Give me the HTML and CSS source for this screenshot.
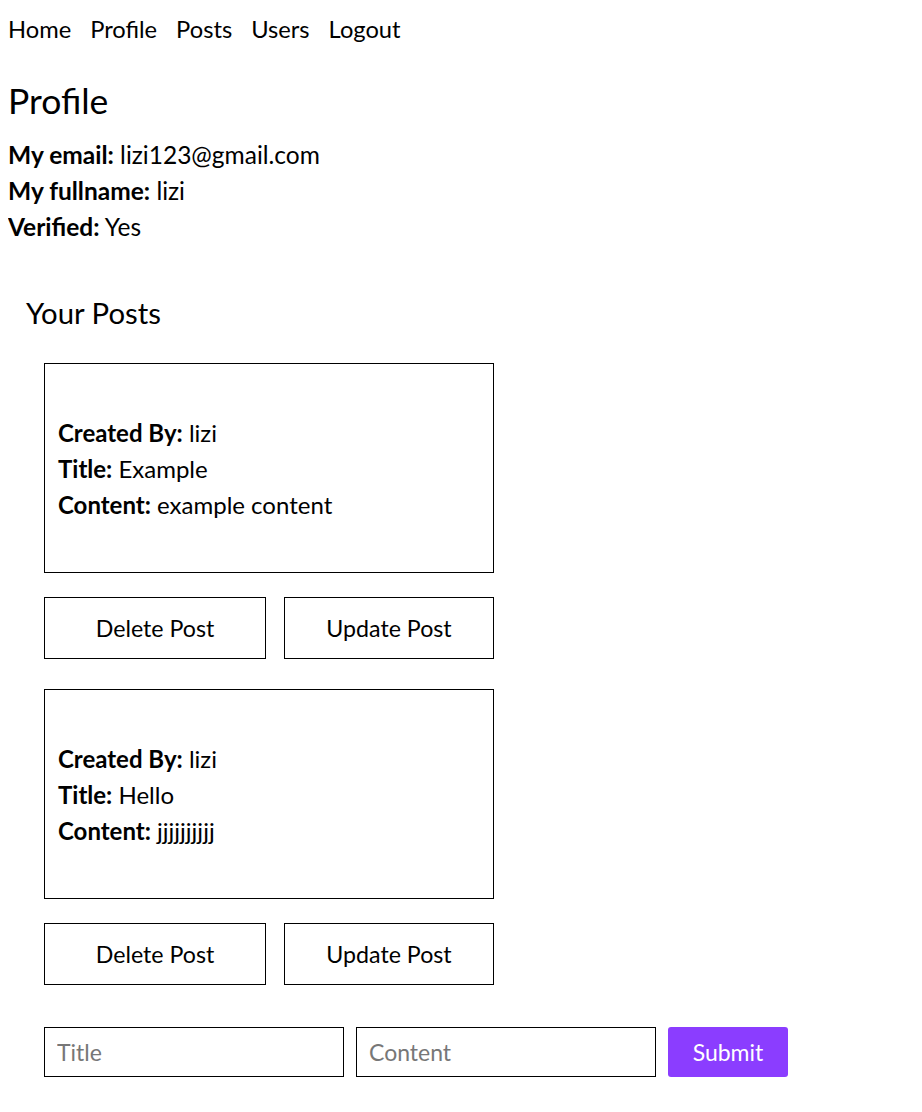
FILE: index.html
```html
<!DOCTYPE html>
<html>
<head>
<meta charset="utf-8">
<link rel="stylesheet" href="styles.css">
</head>
<body>
<nav class="nav">
  <a class="nav-link" href="#">Home</a>
  <a class="nav-link" href="#">Profile</a>
  <a class="nav-link" href="#">Posts</a>
  <a class="nav-link" href="#">Users</a>
  <a class="nav-link" href="#">Logout</a>
</nav>
<h1 class="title">Profile</h1>
<div class="info">
  <div class="info-line"><b>My email:</b> lizi123@gmail.com</div>
  <div class="info-line"><b>My fullname:</b> lizi</div>
  <div class="info-line"><b>Verified:</b> Yes</div>
</div>
<section class="posts">
  <h2 class="posts-title">Your Posts</h2>
  <div class="post-list">
    <div class="post">
      <div class="post-card">
        <div class="card-line"><b>Created By:</b> lizi</div>
        <div class="card-line"><b>Title:</b> Example</div>
        <div class="card-line"><b>Content:</b> example content</div>
      </div>
      <div class="post-actions">
        <button class="btn btn-delete">Delete Post</button>
        <button class="btn btn-update">Update Post</button>
      </div>
    </div>
    <div class="post">
      <div class="post-card">
        <div class="card-line"><b>Created By:</b> lizi</div>
        <div class="card-line"><b>Title:</b> Hello</div>
        <div class="card-line"><b>Content:</b> jjjjjjjjjj</div>
      </div>
      <div class="post-actions">
        <button class="btn btn-delete">Delete Post</button>
        <button class="btn btn-update">Update Post</button>
      </div>
    </div>
    <form class="new-post">
      <input class="field" type="text" placeholder="Title">
      <input class="field" type="text" placeholder="Content">
      <button class="submit" type="button">Submit</button>
    </form>
  </div>
</section>
</body>
</html>
```
FILE: styles.css
```css
body {
  margin: 8px;
  font-family: Lato, "Liberation Sans", sans-serif;
  font-size: 23px;
  color: #000;
  background: #fff;
}
.nav {
  display: flex;
  gap: 19px;
  height: 58px;
  align-items: center;
  margin-top: -8px;
}
.nav-link {
  color: #000;
  text-decoration: none;
  font-size: 23.7px;
}
.title {
  font-size: 35.5px;
  font-weight: 400;
  margin: 18px 0 11px;
  line-height: 50px;
}
.info-line {
  font-size: 24.5px;
  line-height: 36px;
}
.card-line {
  font-size: 24px;
  line-height: 36px;
  padding-top: 1px;
  margin-bottom: -1px;
}
b {
  font-weight: 700;
}
.posts {
  margin-top: 48px;
  padding-left: 18px;
}
.posts-title {
  font-size: 29.3px;
  font-weight: 400;
  margin: 0;
  line-height: 40px;
}
.post-list {
  padding-left: 18px;
  margin-top: 30px;
  display: flex;
  flex-direction: column;
}
.post {
  display: flex;
  flex-direction: column;
  gap: 24px;
  margin-bottom: 30px;
}
.post-card {
  box-sizing: border-box;
  width: 450px;
  height: 210px;
  border: 1px solid #000;
  padding: 0 13px;
  display: flex;
  flex-direction: column;
  justify-content: center;
}
.post-actions {
  display: flex;
  gap: 18px;
}
.btn {
  box-sizing: border-box;
  height: 62px;
  background: #fff;
  border: 1px solid #000;
  font-family: inherit;
  font-size: 23.2px;
  color: #000;
  padding: 0;
}
.btn-delete { width: 222px; }
.btn-update { width: 210px; }
.new-post {
  display: flex;
  gap: 12px;
  margin: 12px 0 0;
}
.field {
  box-sizing: border-box;
  width: 300px;
  height: 50px;
  border: 1px solid #000;
  padding: 0 12px;
  font-family: inherit;
  font-size: 23px;
  outline: none;
}
.field::placeholder {
  color: #777;
}
.submit {
  box-sizing: border-box;
  width: 120px;
  height: 50px;
  border: none;
  border-radius: 3px;
  background: #8b3dff;
  color: #fff;
  font-family: inherit;
  font-size: 23px;
}
```
